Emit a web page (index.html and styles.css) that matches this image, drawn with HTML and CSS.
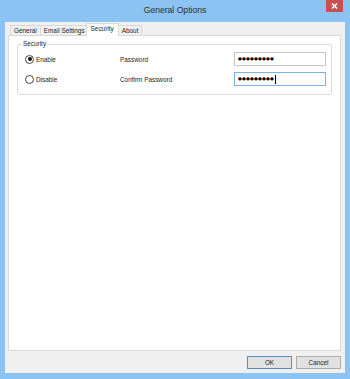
FILE: index.html
```html
<!DOCTYPE html>
<html>
<head>
<meta charset="utf-8">
<link rel="stylesheet" href="styles.css">
</head>
<body>
<div class="window">
  <div class="titlebar">
    <span></span>
    <div class="title">General Options</div>
    <div class="close">
      <svg width="7" height="6" viewBox="0 0 7 6"><path d="M1 0.5 L6 5.5 M6 0.5 L1 5.5" stroke="#fff" stroke-width="1.6"/></svg>
    </div>
  </div>
  <div class="client">
    <div class="tabs">
      <div class="tab">General</div>
      <div class="tab">Email Settings</div>
      <div class="tab active">Security</div>
      <div class="tab">About</div>
    </div>
    <div class="panel">
      <fieldset class="group">
        <legend>Security</legend>
        <div class="grid">
          <label class="radio"><span class="rb checked"></span>Enable</label>
          <span class="lbl">Password</span>
          <div class="pw"><span class="dots">●●●●●●●●●</span></div>
          <label class="radio"><span class="rb"></span>Disable</label>
          <span class="lbl">Confirm Password</span>
          <div class="pw focus"><span class="dots">●●●●●●●●●</span><span class="caret"></span></div>
        </div>
      </fieldset>
    </div>
    <div class="footer">
      <button class="btn default">OK</button>
      <button class="btn">Cancel</button>
    </div>
  </div>
</div>
</body>
</html>
```
FILE: styles.css
```css
* { box-sizing: border-box; }
html, body { margin: 0; padding: 0; }
body {
  width: 350px;
  height: 379px;
  overflow: hidden;
  background: #8cc3f2;
  font-family: "Liberation Sans", Arial, sans-serif;
  font-size: 6.4px;
  color: #1e1e1e;
}
.window {
  width: 350px;
  height: 379px;
  display: flex;
  flex-direction: column;
  padding: 0 5px 6px 5px;
}
.titlebar {
  height: 22px;
  display: grid;
  grid-template-columns: 1fr auto 1fr;
  align-items: start;
}
.title {
  font-size: 8.6px;
  line-height: 20px;
  color: #2e2e2e;
}
.close {
  justify-self: end;
  margin-right: 2px;
  width: 17px;
  height: 12px;
  background: #c75050;
  display: flex;
  align-items: center;
  justify-content: center;
}
.close svg { display: block; }
.client {
  flex: 1;
  background: #f0f0f0;
  display: flex;
  flex-direction: column;
  padding: 1px 4px 4px 3px;
}
.tabs {
  display: flex;
  align-items: flex-end;
  height: 12px;
  padding-left: 2px;
  position: relative;
  z-index: 1;
}
.tab {
  height: 10px;
  padding: 0 3px;
  border: 1px solid #d9d9d9;
  border-bottom: none;
  margin-right: -1px;
  line-height: 9px;
  background: #f0f0f0;
  white-space: nowrap;
}
.tab.active {
  height: 13px;
  margin: 0 -1px -1px -2px;
  padding: 0 4px;
  line-height: 10px;
  background: #fff;
}
.panel {
  flex: 1;
  background: #fff;
  border: 1px solid #d9d9d9;
  padding: 4px 8px 8px 8px;
}
.group {
  margin: 0;
  border: 1px solid #dcdcdc;
  border-radius: 2px;
  padding: 4px 5px 8px 7px;
  min-width: 0;
}
.group legend {
  padding: 0 1px;
  margin-left: -3px;
  line-height: 8px;
  font-size: 6.4px;
}
.grid {
  display: grid;
  grid-template-columns: 95px 1fr 92px;
  grid-auto-rows: 14px;
  row-gap: 6px;
  align-items: center;
}
.radio {
  display: flex;
  align-items: center;
  gap: 2px;
}
.rb {
  width: 9px;
  height: 9px;
  border: 1px solid #444;
  border-radius: 50%;
  background: #fff;
  display: flex;
  align-items: center;
  justify-content: center;
}
.rb.checked::after {
  content: "";
  width: 4px;
  height: 4px;
  border-radius: 50%;
  background: #111;
}
.pw {
  height: 14px;
  border: 1px solid #c6c6c6;
  background: #fff;
  padding-left: 3px;
  display: flex;
  align-items: center;
}
.pw.focus { border-color: #7eb4ea; }
.dots {
  font-family: "DejaVu Sans", sans-serif;
  font-size: 4.3px;
  letter-spacing: 0.25px;
  color: #000;
  line-height: 6px;
}
.caret {
  width: 1px;
  height: 9px;
  background: #000;
  margin-left: 0.5px;
}
.footer {
  display: flex;
  justify-content: flex-end;
  gap: 4px;
  margin-top: 5px;
}
.btn {
  width: 45px;
  height: 13px;
  padding: 0;
  border: 1px solid #adadad;
  background: #e1e1e1;
  font-family: inherit;
  font-size: 6.4px;
  color: #1e1e1e;
  line-height: 11px;
}
.btn.default { border-color: #4f8fcc; }
```
